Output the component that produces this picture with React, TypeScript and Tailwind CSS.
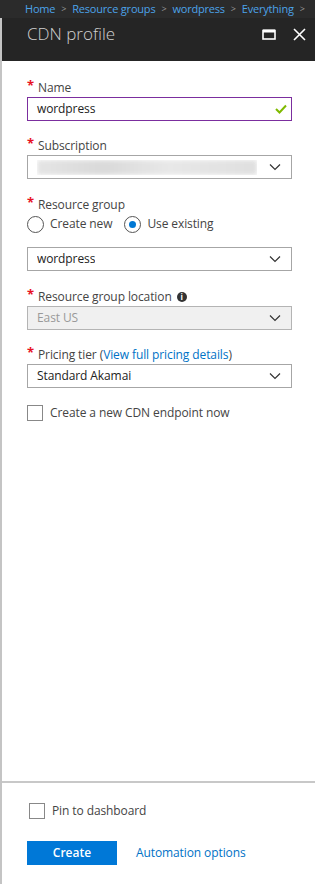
import React, { useState } from 'react';

const font = { fontFamily: '"Segoe UI", "Open Sans", "Noto Sans", sans-serif' };

const Chevron = () => (
  <svg width="12" height="8" viewBox="0 0 12 8" className="shrink-0">
    <path d="M1 1.5 L6 6.5 L11 1.5" fill="none" stroke="#333" strokeWidth="1.2" />
  </svg>
);

const Label: React.FC<{ children: React.ReactNode }> = ({ children }) => (
  <div className="flex items-start h-[16px] text-[12px] leading-[16px] text-[#444] tracking-[-0.1px]">
    <span className="text-[#e81123] text-[13px] leading-[10px] mr-[4px] font-bold">*</span>
    <span>{children}</span>
  </div>
);

const Select: React.FC<{ value?: React.ReactNode; disabled?: boolean }> = ({ value, disabled }) => (
  <div
    className={`h-[24px] flex items-center justify-between pl-[9px] pr-[10px] border ${
      disabled ? 'bg-[#f0f0f0] border-[#b4b4b4] text-[#999]' : 'bg-white border-[#a6a6a6] text-[#222]'
    } text-[12px] tracking-[-0.1px]`}
  >
    <span className="truncate">{value}</span>
    <Chevron />
  </div>
);

const App: React.FC = () => {
  const [existing, setExisting] = useState(true);

  return (
    <div className="w-[315px] h-[884px] flex flex-col bg-white overflow-hidden" style={font}>
      {/* breadcrumb */}
      <div className="h-[18px] bg-[#2b2b2b] flex items-center gap-[6px] pl-[25px] text-[11px] tracking-[-0.2px] text-[#4ca3ea] whitespace-nowrap overflow-hidden">
        <span>Home</span>
        <span className="text-[#999] text-[9px]">&gt;</span>
        <span>Resource groups</span>
        <span className="text-[#999] text-[9px]">&gt;</span>
        <span>wordpress</span>
        <span className="text-[#999] text-[9px]">&gt;</span>
        <span>Everything</span>
        <span className="text-[#999] text-[9px]">&gt;</span>
      </div>

      <div className="flex flex-1 min-h-0">
        <div className="w-[2px] bg-[#c4c4c4] shrink-0" />
        <div className="flex-1 flex flex-col min-w-0">
          {/* header */}
          <div className="h-[43px] bg-[#252525] flex items-start justify-between pl-[25px] pr-[9px] pt-[3px]">
            <span className="text-[17px] text-[#d0d0d0] font-light">CDN profile</span>
            <div className="flex items-center gap-[17px] pt-[7px]">
              <svg width="14" height="11" viewBox="0 0 14 11">
                <rect x="1" y="1.5" width="12" height="8.5" fill="none" stroke="#fff" strokeWidth="1.6" />
                <rect x="1" y="0.5" width="12" height="3" fill="#fff" />
              </svg>
              <svg width="13" height="13" viewBox="0 0 13 13">
                <path d="M1 1 L12 12 M12 1 L1 12" stroke="#fff" strokeWidth="1.6" />
              </svg>
            </div>
          </div>

          {/* form */}
          <div className="flex-1 flex flex-col px-[25px] pr-[23px] pt-[19px]">
            <Label>Name</Label>
            <div className="mt-[1px] h-[24px] border border-[#7b2e9e] flex items-center justify-between pl-[9px] pr-[4px] text-[12px] tracking-[-0.1px] text-[#222]">
              <span>wordpress</span>
              <svg width="12" height="10" viewBox="0 0 12 10">
                <path d="M1 5 L4.5 8.5 L11 1.5" fill="none" stroke="#7fba00" strokeWidth="2" />
              </svg>
            </div>

            <div className="mt-[17px]">
              <Label>Subscription</Label>
            </div>
            <div className="mt-[1px]">
              <Select
                value={
                  <span className="block w-[220px] h-[15px] bg-[linear-gradient(90deg,#e2e2e2,#d6d6d6_30%,#e6e6e6_60%,#dcdcdc)] blur-[2px] opacity-90" />
                }
              />
            </div>

            <div className="mt-[18px]">
              <Label>Resource group</Label>
            </div>
            <div className="mt-[1px] h-[20px] flex items-center text-[12px] tracking-[-0.1px] text-[#444]">
              <button onClick={() => setExisting(false)} className="flex items-center gap-[6px]">
                <span className="w-[17px] h-[17px] rounded-full border border-[#555] flex items-center justify-center bg-white">
                  {!existing && <span className="w-[7px] h-[7px] rounded-full bg-[#0078d4]" />}
                </span>
                <span>Create new</span>
              </button>
              <button onClick={() => setExisting(true)} className="flex items-center gap-[6px] ml-[12px]">
                <span className="w-[17px] h-[17px] rounded-full border border-[#555] flex items-center justify-center bg-white">
                  {existing && <span className="w-[7px] h-[7px] rounded-full bg-[#0078d4]" />}
                </span>
                <span>Use existing</span>
              </button>
            </div>
            <div className="mt-[13px]">
              <Select value="wordpress" />
            </div>

            <div className="mt-[18px]">
              <Label>
                <span className="flex items-center gap-[5px]">
                  Resource group location
                  <span className="w-[10px] h-[10px] rounded-full bg-[#333] text-white text-[8px] leading-[10px] font-bold flex items-center justify-center">i</span>
                </span>
              </Label>
            </div>
            <div className="mt-[1px]">
              <Select value="East US" disabled />
            </div>

            <div className="mt-[17px]">
              <Label>
                Pricing tier (<span className="text-[#0072c6]">View full pricing details</span>)
              </Label>
            </div>
            <div className="mt-[1px]">
              <Select value="Standard Akamai" />
            </div>

            <div className="mt-[15px] h-[20px] flex items-center gap-[7px] text-[12px] tracking-[-0.1px] text-[#444]">
              <span className="w-[16px] h-[16px] border border-[#888] bg-white" />
              <span>Create a new CDN endpoint now</span>
            </div>
          </div>

          {/* footer */}
          <div className="h-[103px] border-t-2 border-[#c8c8c8] px-[25px] pt-[18px]">
            <div className="h-[20px] flex items-center gap-[7px] text-[12px] tracking-[-0.1px] text-[#444] pl-[2px]">
              <span className="w-[16px] h-[16px] border border-[#888] bg-white" />
              <span>Pin to dashboard</span>
            </div>
            <div className="mt-[20px] flex items-center">
              <button className="w-[90px] h-[24px] bg-[#0078d7] text-white text-[12px] font-semibold">Create</button>
              <span className="ml-[19px] text-[12px] tracking-[-0.1px] text-[#0072c6]">Automation options</span>
            </div>
          </div>
        </div>
      </div>
    </div>
  );
};

export default App;
